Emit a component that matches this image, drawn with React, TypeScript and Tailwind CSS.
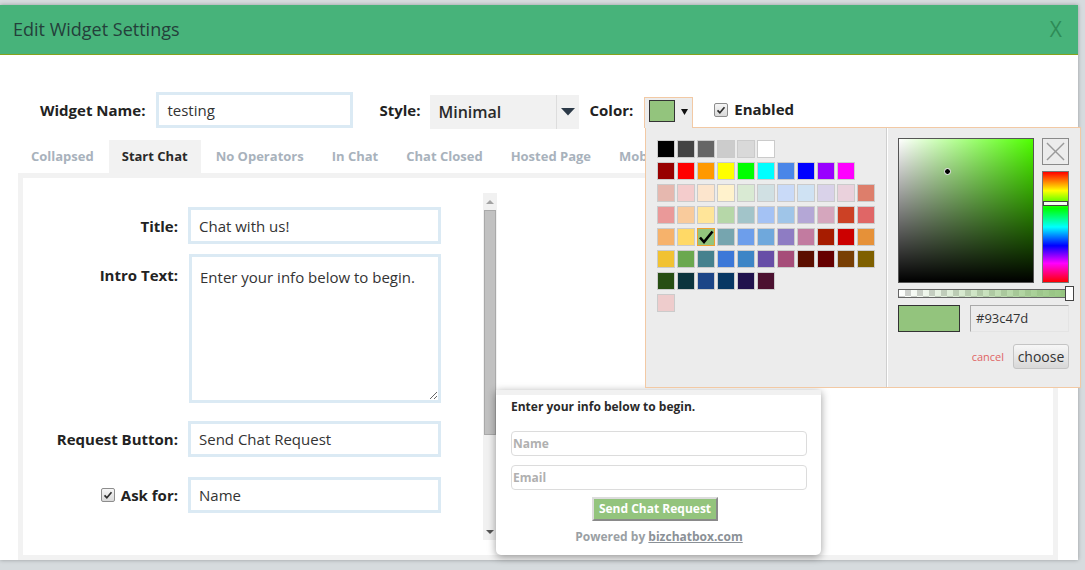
import React from "react";

const paletteRows: { cls: string; sel?: boolean }[][] = [
  ["bg-[#000000]", "bg-[#434343]", "bg-[#666666]", "bg-[#cccccc]", "bg-[#d9d9d9]", "bg-[#ffffff]"].map((c) => ({ cls: c })),
  ["bg-[#980000]", "bg-[#ff0000]", "bg-[#ff9900]", "bg-[#ffff00]", "bg-[#00ff00]", "bg-[#00ffff]", "bg-[#4a86e8]", "bg-[#0000ff]", "bg-[#9900ff]", "bg-[#ff00ff]"].map((c) => ({ cls: c })),
  ["bg-[#e6b8af]", "bg-[#f4cccc]", "bg-[#fce5cd]", "bg-[#fff2cc]", "bg-[#d9ead3]", "bg-[#d0e0e3]", "bg-[#c9daf8]", "bg-[#cfe2f3]", "bg-[#d9d2e9]", "bg-[#ead1dc]", "bg-[#dd7e6b]"].map((c) => ({ cls: c })),
  ["bg-[#ea9999]", "bg-[#f9cb9c]", "bg-[#ffe599]", "bg-[#b6d7a8]", "bg-[#a2c4c9]", "bg-[#a4c2f4]", "bg-[#9fc5e8]", "bg-[#b4a7d6]", "bg-[#d5a6bd]", "bg-[#cc4125]", "bg-[#e06666]"].map((c) => ({ cls: c })),
  ["bg-[#f6b26b]", "bg-[#ffd966]", "bg-[#93c47d]", "bg-[#76a5af]", "bg-[#6d9eeb]", "bg-[#6fa8dc]", "bg-[#8e7cc3]", "bg-[#c27ba0]", "bg-[#a61c00]", "bg-[#cc0000]", "bg-[#e69138]"].map((c, i) => ({ cls: c, sel: i === 2 })),
  ["bg-[#f1c232]", "bg-[#6aa84f]", "bg-[#45818e]", "bg-[#3c78d8]", "bg-[#3d85c6]", "bg-[#674ea7]", "bg-[#a64d79]", "bg-[#5b0f00]", "bg-[#660000]", "bg-[#783f04]", "bg-[#7f6000]"].map((c) => ({ cls: c })),
  ["bg-[#274e13]", "bg-[#0c343d]", "bg-[#1c4587]", "bg-[#073763]", "bg-[#20124d]", "bg-[#4c1130]"].map((c) => ({ cls: c })),
  ["bg-[#eecccc]"].map((c) => ({ cls: c })),
];

const tabs = ["Collapsed", "Start Chat", "No Operators", "In Chat", "Chat Closed", "Hosted Page", "Mobile", "Advanced"];

function Check() {
  return (
    <span className="inline-flex h-[14px] w-[14px] items-center justify-center rounded-[2px] border border-[#8d8d8d] bg-linear-to-b from-[#f6f6f6] to-[#d9d9d9]">
      <svg viewBox="0 0 12 12" className="h-[10px] w-[10px]">
        <path d="M1.8 6.4 L4.6 9.2 L10.2 2.6" stroke="#2e2e2e" strokeWidth="2" fill="none" />
      </svg>
    </span>
  );
}

const labelCls = "text-[15px] leading-[20px] font-bold text-[#222222]";
const fieldCls =
  "border-[3px] border-[#dbeaf4] bg-white px-[8px] text-[15px] text-[#333333] outline-none font-['Open_Sans',sans-serif]";

export default function App() {
  return (
    <div className="relative h-[570px] w-[1085px] overflow-hidden bg-[#d6dbde] pt-[5px] font-['Open_Sans',sans-serif]">
      <div className="flex h-[555px] w-[1078px] flex-col bg-white shadow-[0_0_4px_rgba(0,0,0,0.3)]">
        {/* Header */}
        <div className="flex h-[50px] shrink-0 items-center justify-between border-b border-[#86a21d] bg-[#47b37a] pl-[13px] pr-[16px]">
          <span className="text-[18px] text-[#24403a]">Edit Widget Settings</span>
          <span className="text-[21px] text-[#2e8b57]">X</span>
        </div>

        {/* Settings row */}
        <div className="mt-[37px] flex h-[36px] shrink-0 items-start pl-[40px]">
          <span className={`mt-[8px] ${labelCls}`}>Widget Name:</span>
          <input readOnly value="testing" className={`ml-[11px] h-[36px] w-[197px] ${fieldCls}`} />
          <span className={`ml-[26px] mt-[8px] ${labelCls}`}>Style:</span>
          <div className="ml-[10px] mt-[3px] flex h-[34px] w-[149px] items-center bg-[#f1f1f1]">
            <span className="flex-1 pl-[8px] text-[16px] font-semibold text-[#2a2a2a]">Minimal</span>
            <div className="flex h-full w-[23px] items-center justify-center border-l border-[#dddddd]">
              <svg viewBox="0 0 14 8" className="h-[8px] w-[14px]">
                <path d="M0 0 L14 0 L7 7.5 Z" fill="#2c3a48" />
              </svg>
            </div>
          </div>
          <span className={`ml-[10px] mt-[8px] ${labelCls}`}>Color:</span>
          <div className="relative z-20 ml-[11px] mt-[5px] flex h-[31px] w-[49px] items-start border border-b-0 border-[#f2c9a4] bg-[#ececec] pl-[4px] pt-[2px]">
            <span className="h-[22px] w-[26px] border border-[#333333] bg-[#93c47d]" />
            <svg viewBox="0 0 7 6" className="ml-[6px] mt-[9px] h-[6px] w-[7px]">
              <path d="M0 0 L7 0 L3.5 6 Z" fill="#111111" />
            </svg>
          </div>
          <span className="ml-[21px] mt-[11px] flex">
            <Check />
          </span>
          <span className={`ml-[6px] mt-[7px] ${labelCls}`}>Enabled</span>
        </div>

        {/* Tabs */}
        <div className="mt-[12px] flex h-[33px] shrink-0 gap-[2px] pl-[18px]">
          {tabs.map((t) => (
            <div
              key={t}
              className={
                t === "Start Chat"
                  ? "flex items-center bg-[#f2f2f2] px-[13px] pt-[1px] text-[13px] font-bold text-[#2a2a2a]"
                  : "flex items-center px-[13px] pt-[1px] text-[13px] font-bold text-[#a8b2bc]"
              }
            >
              {t}
            </div>
          ))}
        </div>

        {/* Panel */}
        <div className="ml-[18px] flex h-[387px] w-[1040px] shrink-0 border-[5px] border-[#f2f2f2] bg-white">
          <div className="flex h-full py-[15px]">
            <div className="w-[460px] pt-[14px]">
              <div className="flex items-center">
                <span className={`w-[165px] pr-[10px] text-right ${labelCls}`}>Title:</span>
                <input readOnly value="Chat with us!" className={`h-[37px] w-[253px] ${fieldCls}`} />
              </div>
              <div className="mt-[10px] flex items-start">
                <span className={`w-[165px] pr-[10px] pt-[11px] text-right ${labelCls}`}>Intro Text:</span>
                <textarea
                  readOnly
                  value="Enter your info below to begin."
                  className={`ml-[1px] h-[149px] w-[252px] resize pt-[10px] leading-[20px] ${fieldCls}`}
                />
              </div>
              <div className="mt-[18px] flex items-center">
                <span className={`w-[165px] pr-[10px] text-right ${labelCls}`}>Request Button:</span>
                <input readOnly value="Send Chat Request" className={`h-[36px] w-[253px] ${fieldCls}`} />
              </div>
              <div className="mt-[20px] flex items-center">
                <span className="flex w-[165px] items-center justify-end gap-[6px] pr-[10px]">
                  <Check />
                  <span className={labelCls}>Ask for:</span>
                </span>
                <input readOnly value="Name" className={`h-[36px] w-[253px] ${fieldCls}`} />
              </div>
            </div>

            {/* Scrollbar */}
            <div className="flex h-full w-[14px] flex-col bg-[#f1f1f1]">
              <div className="flex h-[17px] items-center justify-center">
                <svg viewBox="0 0 8 4" className="h-[4px] w-[8px]">
                  <path d="M0 4 L8 4 L4 0 Z" fill="#a3a3a3" />
                </svg>
              </div>
              <div className="mx-[1px] h-[225px] border border-[#a9a9a9] bg-[#c1c1c1]" />
              <div className="flex-1" />
              <div className="flex h-[17px] items-center justify-center">
                <svg viewBox="0 0 8 4" className="h-[4px] w-[8px]">
                  <path d="M0 0 L8 0 L4 4 Z" fill="#555555" />
                </svg>
              </div>
            </div>
          </div>
        </div>
      </div>

      {/* Preview card */}
      <div className="absolute left-[496px] top-[390px] z-10 flex h-[165px] w-[325px] flex-col rounded-b-[5px] bg-white shadow-[0_2px_8px_rgba(0,0,0,0.4)]">
        <div className="h-[5px] bg-[#f1f1f1]" />
        <div className="flex flex-col pl-[15px] pr-[14px]">
          <div className="mt-[4px] text-[12px] leading-[16px] font-bold text-[#2a2a2a]">Enter your info below to begin.</div>
          <div className="mt-[16px] flex h-[25px] items-center rounded-[4px] border border-[#dcdcdc] pl-[1px] text-[12px] font-bold text-[#b0b0b0]">
            Name
          </div>
          <div className="mt-[9px] flex h-[25px] items-center rounded-[4px] border border-[#dcdcdc] pl-[1px] text-[12px] font-bold text-[#b0b0b0]">
            Email
          </div>
          <div className="mt-[7px] flex justify-center pr-[8px]">
            <div className="flex h-[24px] w-[126px] items-center justify-center border-2 border-l-[#dcdcdc] border-t-[#dcdcdc] border-r-[#8a8a8a] border-b-[#8a8a8a] bg-[#93c47d] text-[12px] font-bold text-white">
              Send Chat Request
            </div>
          </div>
          <div className="mt-[8px] text-center text-[12px] leading-[16px] font-bold text-[#9aa0a4]">
            Powered by <span className="text-[#8a9096] underline">bizchatbox.com</span>
          </div>
        </div>
      </div>

      {/* Color picker popover */}
      <div className="absolute left-[645px] top-[127px] z-10 flex h-[261px] w-[436px] border border-[#f2c9a4] bg-[#ececec]">
        <div className="flex w-[241px] shrink-0 flex-col gap-[4px] border-r border-[#cfcfcf] pl-[11px] pt-[12px]">
          {paletteRows.map((row, ri) => (
            <div key={ri} className="flex gap-[2px]">
              {row.map((s, si) => (
                <div
                  key={si}
                  className={`relative h-[18px] w-[18px] border ${s.sel ? "border-[#f0a030]" : "border-[#cbcbcb]"} ${s.cls}`}
                >
                  {s.sel && (
                    <svg viewBox="0 0 18 18" className="absolute left-[-1px] top-[-1px] h-[18px] w-[18px]">
                      <path d="M3 9.5 L7 14 L15.5 3.5" stroke="#000" strokeWidth="2.6" fill="none" />
                    </svg>
                  )}
                </div>
              ))}
            </div>
          ))}
        </div>
        <div className="flex min-w-0 flex-1 flex-col border-l border-white pl-[10px] pt-[10px]">
          <div className="flex gap-[8px]">
            <div className="relative h-[145px] w-[136px] shrink-0 border border-[#555555] bg-[#4fff00]">
              <div className="absolute inset-0 bg-linear-to-r from-white to-transparent" />
              <div className="absolute inset-0 bg-linear-to-t from-black to-transparent" />
              <div className="absolute left-[45px] top-[29px] h-[7px] w-[7px] rounded-full border border-white bg-black" />
            </div>
            <div className="flex shrink-0 flex-col gap-[6px]">
              <div className="flex h-[27px] w-[27px] items-center justify-center border border-[#8a8a8a] bg-[#ececec]">
                <svg viewBox="0 0 20 20" className="h-[19px] w-[19px]">
                  <path d="M1 1 L19 19 M19 1 L1 19" stroke="#9a9a9a" strokeWidth="1.5" />
                </svg>
              </div>
              <div className="relative h-[112px] w-[27px] border border-[#777777] bg-[image:linear-gradient(to_bottom,#ff0000_0%,#ffff00_17%,#00ff00_33%,#00ffff_50%,#0000ff_67%,#ff00ff_83%,#ff0000_100%)]">
                <div className="absolute left-0 right-0 top-[29px] h-[5px] border border-[#444444] bg-[#f4fff0]" />
              </div>
            </div>
          </div>
          <div className="relative mt-[6px] h-[9px] w-[174px] shrink-0 border border-[#666666] bg-[image:repeating-conic-gradient(#d0d0d0_0_25%,#ffffff_0_50%)] bg-[length:12px_12px]">
            <div className="absolute inset-0 bg-linear-to-r from-[rgba(147,196,125,0)] to-[#93c47d]" />
            <div className="absolute right-[-3px] top-[-4px] h-[15px] w-[9px] border border-[#444444] bg-white" />
          </div>
          <div className="mt-[7px] flex gap-[10px]">
            <div className="h-[27px] w-[62px] shrink-0 border border-[#333333] bg-[#93c47d]" />
            <div className="flex h-[27px] w-[99px] shrink-0 items-center border border-b-[#e4e4e4] border-l-[#a9a9a9] border-r-[#e4e4e4] border-t-[#a9a9a9] pl-[5px] text-[13px] text-[#333333]">
              #93c47d
            </div>
          </div>
          <div className="mt-[12px] flex w-[171px] items-center justify-end">
            <span className="mt-[2px] text-[11px] text-[#e06464]">cancel</span>
            <div className="ml-[9px] flex h-[25px] w-[56px] items-center justify-center rounded-[3px] border border-[#c4c4c4] bg-linear-to-b from-[#f7f7f7] to-[#d8d8d8] text-[14px] text-[#333333]">
              choose
            </div>
          </div>
        </div>
      </div>
    </div>
  );
}
